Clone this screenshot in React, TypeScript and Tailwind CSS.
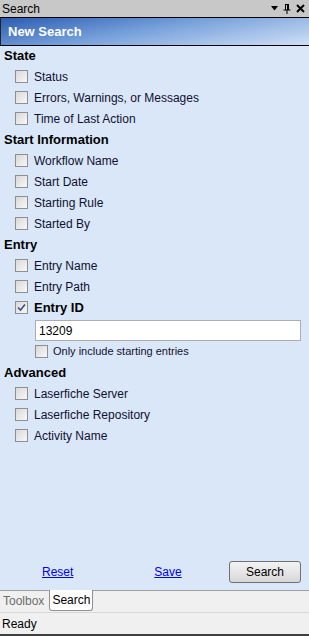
import React from "react";

function Box({ checked = false }: { checked?: boolean }) {
  return (
    <div className="w-[13px] h-[13px] border border-[#8e8f8f] bg-[linear-gradient(135deg,#d8d8d8,#f8f8f8)] flex items-center justify-center shrink-0">
      {checked && (
        <svg width="9" height="9" viewBox="0 0 9 9">
          <path d="M1 4.5 L3.5 7 L8 1.5" fill="none" stroke="#3d4f86" strokeWidth="1.6" />
        </svg>
      )}
    </div>
  );
}

function Item({ label, checked = false, bold = false }: { label: string; checked?: boolean; bold?: boolean }) {
  return (
    <div className="h-[21px] flex items-center pl-[15px] gap-[6px]">
      <Box checked={checked} />
      <span className={bold ? "font-bold text-[13px] text-black" : "text-[12px] text-[#101030]"}>{label}</span>
    </div>
  );
}

function Header({ label, first = false }: { label: string; first?: boolean }) {
  return (
    <div className={`${first ? "h-[20px]" : "h-[21px]"} flex items-center pl-[4px] text-[13px] font-bold text-black`}>{label}</div>
  );
}

export default function App() {
  return (
    <div
      className="w-[309px] h-[636px] flex flex-col overflow-hidden bg-[#dae7f9]"
      style={{ fontFamily: '"Liberation Sans", Arial, sans-serif' }}
    >
      {/* title bar */}
      <div className="h-[17px] bg-[#c8c8c8] flex items-center justify-between px-[2px] shrink-0">
        <span className="text-[12px] text-black leading-none">Search</span>
        <div className="flex items-center gap-[5px] pr-[2px]">
          <svg width="7" height="5" viewBox="0 0 7 5"><path d="M0 0 H7 L3.5 4.5 Z" fill="#000" /></svg>
          <svg width="8" height="10" viewBox="0 0 8 10">
            <path d="M2 0.5 H6 M2.5 0.5 V6 M5.5 0.5 V6 M0.5 6 H7.5 M4 6 V10" stroke="#000" strokeWidth="1" fill="none" />
            <path d="M4.5 1 V6" stroke="#000" strokeWidth="1" />
          </svg>
          <svg width="9" height="9" viewBox="0 0 9 9"><path d="M1 1 L8 8 M8 1 L1 8" stroke="#000" strokeWidth="2" /></svg>
        </div>
      </div>
      {/* New Search header */}
      <div className="h-[29px] border-y border-black border-l border-l-[#222] bg-[linear-gradient(170deg,#2c5cb2_0%,#76a0da_45%,#cfe0f6_100%)] flex items-center pl-[7px] shrink-0">
        <span className="text-[13px] font-bold text-white">New Search</span>
      </div>

      <div className="flex flex-col">
        <Header label="State" first />
        <Item label="Status" />
        <Item label="Errors, Warnings, or Messages" />
        <Item label="Time of Last Action" />
        <Header label="Start Information" />
        <Item label="Workflow Name" />
        <Item label="Start Date" />
        <Item label="Starting Rule" />
        <Item label="Started By" />
        <Header label="Entry" />
        <Item label="Entry Name" />
        <Item label="Entry Path" />
        <Item label="Entry ID" checked bold />
        <div className="pl-[35px] pr-[8px] pt-[2px]">
          <div className="h-[21px] bg-white border border-[#abadb3] flex items-center pl-[3px] text-[12px] text-black">13209</div>
        </div>
        <div className="h-[21px] flex items-center pl-[35px] gap-[5px]">
          <Box />
          <span className="text-[11px] text-[#101030]">Only include starting entries</span>
        </div>
        <Header label="Advanced" />
        <Item label="Laserfiche Server" />
        <Item label="Laserfiche Repository" />
        <Item label="Activity Name" />
      </div>

      <div className="flex-1" />

      {/* buttons */}
      <div className="h-[30px] flex items-center shrink-0 pb-[6px]">
        <a className="ml-[42px] text-[12px] text-[#0000ee] underline">Reset</a>
        <a className="ml-[81px] text-[12px] text-[#0000ee] underline">Save</a>
        <button className="ml-auto mr-[8px] w-[72px] h-[22px] rounded-[3px] border border-[#707070] bg-[linear-gradient(#f2f2f2,#e6e6e6_50%,#d6d6d6)] text-[12px] text-black">
          Search
        </button>
      </div>

      {/* tabs */}
      <div className="h-[22px] bg-[#f0f0f0] border-t border-[#a0a0a0] flex items-start pl-[2px] shrink-0">
        <div className="px-[1px] h-[20px] flex items-center text-[12px] text-[#6d6d6d]">Toolbox</div>
        <div className="ml-[4px] -mt-[1px] px-[2px] h-[21px] bg-white border border-[#919191] border-t-0 rounded-b-[3px] flex items-center text-[12px] text-black">Search</div>
      </div>

      {/* status bar */}
      <div className="h-[24px] bg-[#f0f0f0] border-t border-[#d8d8d8] border-b-2 border-b-[#404040] flex items-center pl-[2px] shrink-0">
        <span className="text-[12px] text-black">Ready</span>
      </div>
    </div>
  );
}
